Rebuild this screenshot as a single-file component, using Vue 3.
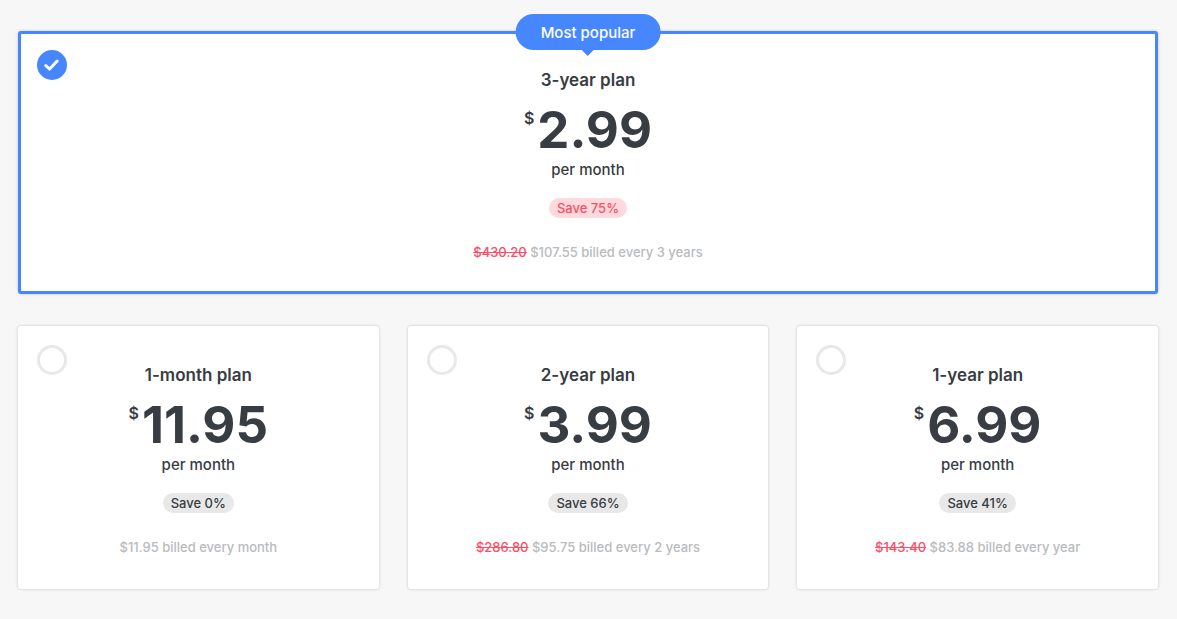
<script setup>
import { ref } from 'vue'

const plans = [
  { id: 'y3', name: '3-year plan', price: '2.99', save: 'Save 75%', old: '$430.20', billed: '$107.55 billed every 3 years', popular: true },
  { id: 'm1', name: '1-month plan', price: '11.95', save: 'Save 0%', old: '', billed: '$11.95 billed every month' },
  { id: 'y2', name: '2-year plan', price: '3.99', save: 'Save 66%', old: '$286.80', billed: '$95.75 billed every 2 years' },
  { id: 'y1', name: '1-year plan', price: '6.99', save: 'Save 41%', old: '$143.40', billed: '$83.88 billed every year' },
]
const selected = ref('y3')
</script>

<template>
  <main class="plans">
    <label
      v-for="plan in plans"
      :key="plan.id"
      class="card"
      :class="{ popular: plan.popular, selected: selected === plan.id }"
      :for="plan.id"
    >
      <span v-if="plan.popular" class="ribbon">Most popular</span>
      <span class="pick">
        <input :id="plan.id" v-model="selected" type="radio" name="plan" :value="plan.id" />
        <svg v-if="selected === plan.id" viewBox="0 0 30 30" aria-hidden="true">
          <path d="M8.8 15.6 L12.6 19 L20.2 11" />
        </svg>
      </span>
      <span class="name">{{ plan.name }}</span>
      <span class="price"><span class="currency">$</span><span class="amount">{{ plan.price }}</span></span>
      <span class="period">per month</span>
      <span class="save">{{ plan.save }}</span>
      <span class="billing"><template v-if="plan.old"><s>{{ plan.old }}</s>{{ ' ' }}</template>{{ plan.billed }}</span>
    </label>
  </main>
</template>

<style>
body {
  margin: 0;
  background: #f7f7f7;
}
</style>

<style scoped>
.plans {
  display: grid;
  grid-template-columns: repeat(3, 1fr);
  gap: 32px 29px;
  padding: 31px 19px 29px 18px;
  font-family: Inter, "Liberation Sans", sans-serif;
  color: #383c43;
}
.card {
  position: relative;
  box-sizing: border-box;
  display: flex;
  flex-direction: column;
  align-items: center;
  padding: 34px 16px 29px;
  border: 3px solid #fff;
  border-radius: 3px;
  background: #fff;
  box-shadow: 0 0 3px rgba(0, 0, 0, 0.22);
  cursor: pointer;
}
.popular {
  grid-column: 1 / -1;
}
.selected {
  border-color: #4687ff;
}
.ribbon {
  position: absolute;
  top: -20px;
  left: 50%;
  transform: translateX(-50%);
  padding: 1px 25px 0;
  border-radius: 18px;
  background: #4687ff;
  color: #fff;
  font-size: 15px;
  font-weight: 500;
  line-height: 35px;
  white-space: nowrap;
}
.ribbon::after {
  content: "";
  position: absolute;
  top: 100%;
  left: 50%;
  margin-left: -6px;
  border: 6px solid transparent;
  border-top-color: #4687ff;
  border-bottom: 0;
}
.pick {
  position: absolute;
  top: 16px;
  left: 16px;
  width: 30px;
  height: 30px;
}
.pick input {
  appearance: none;
  display: block;
  box-sizing: border-box;
  width: 30px;
  height: 30px;
  margin: 0;
  border: 3px solid #e8e8e8;
  border-radius: 50%;
  background: #fff;
}
.pick input:checked {
  border-color: #4687ff;
  background: #4687ff;
}
.pick svg {
  position: absolute;
  inset: 0;
  fill: none;
  stroke: #fff;
  stroke-width: 3;
  stroke-linecap: round;
  stroke-linejoin: miter;
  pointer-events: none;
}
.name {
  font-size: 17px;
  font-weight: 600;
  line-height: 24px;
}
.price {
  display: flex;
  align-items: flex-start;
  gap: 3px;
  margin-top: 8px;
}
.currency {
  font-size: 16px;
  font-weight: 600;
  line-height: 36px;
}
.amount {
  font-size: 51px;
  font-weight: 700;
  line-height: 60px;
}
.period {
  font-size: 15px;
  font-weight: 500;
  line-height: 20px;
}
.save {
  margin-top: 18px;
  padding: 0 8px;
  border-radius: 10px;
  background: #e8e8e8;
  font-size: 13px;
  font-weight: 500;
  line-height: 20px;
}
.popular .save {
  background: #ffdadd;
  color: #fa4f67;
}
.billing {
  margin-top: 24px;
  color: #b9bbbe;
  font-size: 13px;
  font-weight: 500;
  line-height: 20px;
}
.billing s {
  color: #fa4f67;
}
</style>
